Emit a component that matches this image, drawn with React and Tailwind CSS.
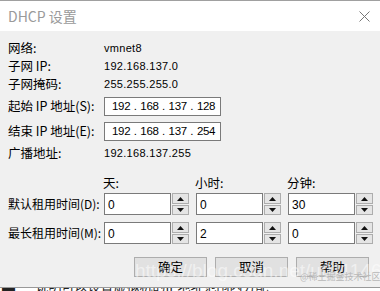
const cjk = { fontFamily: '"Noto Sans CJK SC", "Noto Sans", sans-serif' };
const num = { fontFamily: '"Liberation Sans", "Noto Sans CJK SC", sans-serif' };

function Spinner() {
  return (
    <div className="ml-px flex w-[17px] h-[22px] flex-col gap-px">
      <div className="flex h-[11px] items-center justify-center border border-[#adadad] bg-[#e5e5e5]">
        <svg width="7" height="4" viewBox="0 0 7 4"><path d="M3.5 0L7 4H0z" fill="#111" /></svg>
      </div>
      <div className="flex h-[10px] items-center justify-center border border-[#adadad] bg-[#e5e5e5]">
        <svg width="7" height="4" viewBox="0 0 7 4"><path d="M0 0h7L3.5 4z" fill="#111" /></svg>
      </div>
    </div>
  );
}

function Spin({ value }) {
  return (
    <div className="flex">
      <div className="flex h-[22px] w-[68px] items-start border border-[#7a7a7a] bg-white pl-[3px] pt-[2px] text-[12px] text-black" style={num}>
        {value}
      </div>
      <Spinner />
    </div>
  );
}

function Label({ children }) {
  return (
    <div className="w-[96px] shrink-0 whitespace-nowrap text-[12.5px] text-black" style={cjk}>{children}</div>
  );
}

function InfoRow({ label, value }) {
  return (
    <div className="flex h-[18px] items-center">
      <Label>{label}</Label>
      <div className="text-[11px] tracking-[0.3px] text-black" style={num}>{value}</div>
    </div>
  );
}

function IpRow({ label, parts }) {
  return (
    <div className="flex h-[19px] items-center">
      <Label>{label}</Label>
      <div className="flex h-[19px] w-[117px] items-center border border-[#7a7a7a] bg-white pl-[7px] text-[11.5px] text-black" style={num}>
        {parts.map((p, i) => (
          <span key={i} className="flex">
            {i > 0 && <span className="w-[10px] text-center">.</span>}
            <span className="tracking-[-0.3px]">{p}</span>
          </span>
        ))}
      </div>
    </div>
  );
}

function Btn({ children }) {
  return (
    <div className="flex h-[20px] w-[73px] items-center justify-center border border-[#adadad] bg-[#e1e1e1] text-[12.5px] text-black" style={cjk}>
      {children}
    </div>
  );
}

export default function App() {
  return (
    <div className="relative h-[291px] w-[380px] overflow-hidden bg-[#f0f0f0]">
      {/* 标题栏 */}
      <div className="flex h-[31px] items-center justify-between border-t border-[#a0a0a0] bg-white pl-2 pr-[10px]">
        <span className="text-[14px] text-[#9a9a9a]" style={cjk}>DHCP 设置</span>
        <svg width="11" height="11" viewBox="0 0 11 11"><path d="M0.5 0.5l10 10M10.5 0.5l-10 10" stroke="#777" strokeWidth="1" /></svg>
      </div>

      <div className="px-2 pt-[8px]">
        <InfoRow label="网络:" value="vmnet8" />
        <InfoRow label="子网 IP:" value="192.168.137.0" />
        <InfoRow label="子网掩码:" value="255.255.255.0" />
        <div className="mt-[4px]">
          <IpRow label="起始 IP 地址(S):" parts={['192', '168', '137', '128']} />
        </div>
        <div className="mt-[6px]">
          <IpRow label="结束 IP 地址(E):" parts={['192', '168', '137', '254']} />
        </div>
        <div className="mt-[3px]">
          <InfoRow label="广播地址:" value="192.168.137.255" />
        </div>

        <div className="mt-[12px] flex h-[18px] items-center text-[12.5px] text-black" style={cjk}>
          <div className="w-[96px]" />
          <div className="grid grid-cols-[85px_85px_85px] gap-x-[7px]">
            <span>天:</span>
            <span>小时:</span>
            <span>分钟:</span>
          </div>
        </div>

        <div className="mt-px flex items-center">
          <Label><span className="text-[12px]">默认租用时间(D):</span></Label>
          <div className="grid grid-cols-[85px_85px_85px] gap-x-[7px]">
            <Spin value="0" />
            <Spin value="0" />
            <Spin value="30" />
          </div>
        </div>
        <div className="mt-[7px] flex items-center">
          <Label><span className="text-[12px]">最长租用时间(M):</span></Label>
          <div className="grid grid-cols-[85px_85px_85px] gap-x-[7px]">
            <Spin value="0" />
            <Spin value="2" />
            <Spin value="0" />
          </div>
        </div>

        <div className="mt-[13px] flex justify-end gap-[8px] pr-[3px]">
          <Btn>确定</Btn>
          <Btn>取消</Btn>
          <Btn>帮助</Btn>
        </div>
      </div>

      {/* 水印 */}
      <div className="pointer-events-none absolute left-[135px] top-[257px] whitespace-nowrap text-[19px] text-white/50" style={num}>
        https://blog.csdn.net/u011146236
      </div>
      <div className="pointer-events-none absolute left-[300px] top-[270px] whitespace-nowrap text-[9px] text-[#b8b8b8]" style={cjk}>
        @稀土掘金技术社区
      </div>

      {/* 底部背景页面 */}
      <div className="absolute bottom-0 left-0 h-[4px] w-full overflow-hidden border-t border-[#999] bg-white">
        <div className="-mt-[12px] whitespace-nowrap pl-[2px] text-[13px] text-[#222]" style={cjk}>
          ▬&nbsp;&nbsp;&nbsp;&nbsp;&nbsp;&nbsp;&nbsp;说明可以设置虚拟机的IP地址范围内分配
        </div>
      </div>
    </div>
  );
}
